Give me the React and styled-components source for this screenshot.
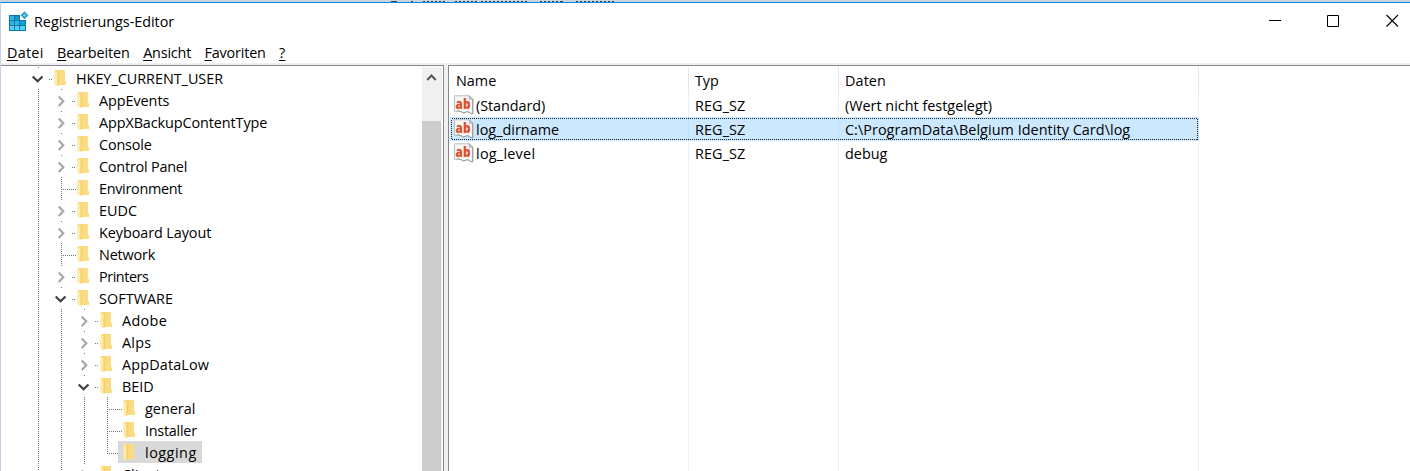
import React from "react";
import styled, { createGlobalStyle } from "styled-components";

const GlobalStyle = createGlobalStyle`
  *, *::before, *::after { box-sizing: border-box; }
  body { margin: 0; background: #fff; overflow: hidden; }
`;

const Window = styled.div`
  display: flex;
  flex-direction: column;
  width: 1410px;
  height: 471px;
  overflow: hidden;
  background: #fff;
  color: #000;
  font: 14.4px/22px "Open Sans", "Noto Sans", sans-serif;
`;

const Backdrop = styled.div`
  flex: none;
  height: 2px;
  background: #c8d3e6;
  svg { display: block; }
`;

const Frame = styled.div`
  flex: 1;
  min-height: 0;
  display: flex;
  flex-direction: column;
  border-top: 1px solid #1883d7;
  border-left: 1px solid #c5d1e8;
`;

const TitleBar = styled.header`
  flex: none;
  display: flex;
  align-items: center;
  height: 37px;
  padding: 0 11px 0 8px;
`;

const AppIcon = styled.svg`
  flex: none;
  display: block;
  width: 20px;
  height: 20px;
  margin: 1px 5px 0 0;
  overflow: visible;
`;

const Label = styled.span`
  white-space: pre;
  letter-spacing: ${(p) => p.$track || 0}px;
`;

const WindowButtons = styled.div`
  display: flex;
  gap: 46px;
  margin-left: auto;
  svg { display: block; width: 13px; height: 13px; margin-top: -2px; }
`;

const MenuBar = styled.nav`
  flex: none;
  display: flex;
  align-items: center;
  gap: 13.4px;
  height: 23px;
  padding: 2px 0 0 6px;
`;

const MenuItem = styled(Label)`
  u { text-underline-offset: 2px; text-decoration-thickness: 1px; text-decoration-skip-ink: none; }
`;

const Panes = styled.main`
  flex: 1;
  min-height: 0;
  display: flex;
  gap: 4px;
  padding-top: 2px;
  background: #f0f0f0;
`;

const TreePane = styled.section`
  flex: none;
  display: flex;
  width: 443px;
  border-top: 1px solid #828790;
  border-right: 1px solid #828790;
  background: #fff;
`;

const Tree = styled.div`
  flex: 1;
  min-width: 0;
  overflow: hidden;
  padding-top: 1px;
`;

const TreeRow = styled.div`
  display: flex;
  height: 22px;
  padding-left: 25px;
`;

const Branch = styled.svg`
  flex: none;
  display: block;
  width: ${(p) => p.$width}px;
  height: 22px;
  overflow: visible;
`;

const TreeItem = styled.div`
  display: flex;
  align-items: center;
  height: 22px;
  padding: 0 5px 0 4px;
  background: ${(p) => (p.$selected ? "#d9d9d9" : "transparent")};
  ${Label} { margin-top: 2px; }
`;

const Folder = styled.svg`
  flex: none;
  display: block;
  width: 13px;
  height: 18px;
  margin-right: 10px;
`;

const ScrollBar = styled.div`
  flex: none;
  width: 20px;
  margin: 1px 1px 0 0;
  padding-right: 1px;
  background: #f0f0f0;
  display: flex;
  flex-direction: column;
`;

const ScrollUp = styled.svg`
  display: block;
  flex: none;
  width: 19px;
  height: 54px;
`;

const ScrollThumb = styled.div`
  flex: 1;
  background: #cdcdcd;
`;

const ListPane = styled.section`
  flex: 1;
  min-width: 0;
  display: flex;
  flex-direction: column;
  border-top: 1px solid #828790;
  border-left: 1px solid #828790;
  padding: 1px 0 0 1px;
  background: #fff;
`;

const columns = "239px 150px 360px";

const HeaderRow = styled.div`
  flex: none;
  display: grid;
  grid-template-columns: ${columns};
  height: 26px;
`;

const HeaderCell = styled.div`
  padding: 3px 0 0 6px;
  border-right: 1px solid #e5e5e5;
`;

const ValueRow = styled.div`
  position: relative;
  flex: none;
  display: grid;
  grid-template-columns: ${columns};
  width: 749px;
  height: 24px;
  background: ${(p) => (p.$selected ? "#cce8ff" : "transparent")};
`;

const ValueCell = styled.div`
  display: flex;
  align-items: center;
  padding: 0 0 0 ${(p) => (p.$first ? 3 : 6)}px;
  border-right: 1px solid ${(p) => (p.$selected ? "#bfe0fb" : "#e5f0fb")};
  ${Label} { margin-top: 2px; }
`;

const FocusRect = styled.svg`
  position: absolute;
  left: 1px;
  top: 1px;
  width: 747px;
  height: 22px;
`;

const Filler = styled.div`
  flex: 1;
  display: grid;
  grid-template-columns: ${columns};
`;

const StringIcon = styled.svg`
  flex: none;
  display: block;
  width: 21px;
  height: 20px;
  margin-right: 2px;
  overflow: visible;
`;

const IconText = styled.text`
  font: 800 13.5px "Open Sans", sans-serif;
  fill: #d9532c;
`;

const treeData = [
  { name: "HKEY_CURRENT_USER", level: 0, kind: "open", track: -0.02 },
  { name: "AppEvents", level: 1, kind: "closed", track: -0.06 },
  { name: "AppXBackupContentType", level: 1, kind: "closed", track: -0.09 },
  { name: "Console", level: 1, kind: "closed", track: -0.15 },
  { name: "Control Panel", level: 1, kind: "closed", track: -0.2 },
  { name: "Environment", level: 1, kind: "leaf", track: -0.3 },
  { name: "EUDC", level: 1, kind: "closed", track: 0 },
  { name: "Keyboard Layout", level: 1, kind: "closed", track: -0.07 },
  { name: "Network", level: 1, kind: "leaf", track: -0.15 },
  { name: "Printers", level: 1, kind: "closed", track: -0.45 },
  { name: "SOFTWARE", level: 1, kind: "open", track: 0.05 },
  { name: "Adobe", level: 2, kind: "closed", track: 0.35 },
  { name: "Alps", level: 2, kind: "closed", track: 0.2 },
  { name: "AppDataLow", level: 2, kind: "closed", track: 0.15 },
  { name: "BEID", level: 2, kind: "open", track: 0 },
  { name: "general", level: 3, kind: "leaf", track: 0 },
  { name: "Installer", level: 3, kind: "leaf", track: -0.25 },
  { name: "logging", level: 3, kind: "leaf", track: 0.5, selected: true, last: true },
  { name: "Clients", level: 2, kind: "closed", track: 0 },
];

const values = [
  { name: "(Standard)", type: "REG_SZ", data: "(Wert nicht festgelegt)", t: [-0.06, 0.1, 0] },
  { name: "log_dirname", type: "REG_SZ", data: "C:\\ProgramData\\Belgium Identity Card\\log", t: [0.02, 0.1, 0.05], selected: true },
  { name: "log_level", type: "REG_SZ", data: "debug", t: [0.25, 0.1, 0] },
];

const INDENT = 23;

function BranchLines({ level, kind, last }) {
  const x = level * INDENT + 12.5;
  const guides = [];
  for (let i = 0; i < level; i++) guides.push(i * INDENT + 12.5);
  return (
    <Branch $width={level * INDENT + 23} aria-hidden="true">
      <g stroke="#777" strokeDasharray="1 1" shapeRendering="crispEdges">
        {guides.map((g) => (
          <path key={g} d={`M${g} 0V22`} />
        ))}
        {kind === "leaf" ? (
          <path d={`M${x} 0V${last ? 13 : 22}M${x + 1.5} 12.5H${x + 14}`} />
        ) : (
          <path d={`M${x} 0V1M${x + 10.5} 12.5H${x + 14}`} />
        )}
      </g>
      {kind === "closed" && <path d={`M${x - 2.8} 7.4l4.6 4.8l-4.6 4.8`} fill="none" stroke="#a6a6a6" strokeWidth="2.1" />}
      {kind === "open" && <path d={`M${x - 5.8} 9.5l4.9 4.8l4.9 -4.8`} fill="none" stroke="#404040" strokeWidth="2.2" />}
    </Branch>
  );
}

function FolderIcon() {
  return (
    <Folder viewBox="0 0 13 18">
      <path d="M2 1H12V12L13 12.5V16H2Z" fill="#f9d575" />
      <path d="M7 1H12V12L13 12.5V16H6Z" fill="#fbdc84" />
      <path d="M1.4 1L4.8 3.5V17.6L1.4 15.5Z" fill="#ffeaa8" />
      <path d="M5 3.5V17" stroke="#efc860" strokeWidth=".7" />
    </Folder>
  );
}

function ValueIcon() {
  return (
    <StringIcon viewBox="0 0 21 20">
      <path d="M1.5 .8H16.5L19.8 4.2V18.8Q17.5 18.8 16 17.3Q14.5 16 12.7 17.3Q10.6 18.8 8.5 17Q6 15 4 16.3L1.5 16.5Z" fill="#f7f7f7" stroke="#bdbdbd" />
      <path d="M19.7 4.5V18.8Q17.5 18.8 16 17.3Q14.5 16 12.7 17.3Q10.6 18.8 8.5 17Q6 15 4 16.3" fill="none" stroke="#999" />
      <path d="M16.3 .8V4.3H19.8Z" fill="#d5d5d5" stroke="#a3a3a3" strokeWidth=".8" />
      <IconText x="2.6" y="13.6" textLength="15" lengthAdjust="spacingAndGlyphs">ab</IconText>
    </StringIcon>
  );
}

function RegeditIcon() {
  return (
    <AppIcon viewBox="0 0 20 20">
      <path d="M0 3H11V8H17V19H0Z" fill="#0b79a9" />
      <path d="M1 4h4v4H1zM1 9h4v4H1zM6 9h4v4H6z" fill="#35b5e5" />
      <path d="M6 4h4v4H6z" fill="#1695c8" />
      <path d="M11 9h5v4h-5z" fill="#1a9bcf" />
      <path d="M1 14h4v4H1zM6 14h4v4H6zM11 14h5v4h-5z" fill="#59cdf4" />
      <path d="M15.5 -.8L19.4 3.2L15.5 7.2L11.6 3.2Z" fill="#2e9cc9" />
      <path d="M15.5 1.5L17.2 3.2L15.5 4.9L13.8 3.2Z" fill="#6fd3f5" />
    </AppIcon>
  );
}

export default function App() {
  return (
    <>
      <GlobalStyle />
      <Window>
        <Backdrop>
          <svg width="700" height="2">
            <path d="M391 1.5h6M411 1.5h2M561 1.5h2" stroke="#3b4354" />
            <path d="M423 1.5h24M455 1.5h23M481 1.5h46M540 1.5h24M576 1.5h38" stroke="#3b4354" strokeDasharray="2 2" />
          </svg>
        </Backdrop>
        <Frame>
          <TitleBar>
            <RegeditIcon />
            <Label $track={-0.04}>Registrierungs-Editor</Label>
            <WindowButtons>
              <svg viewBox="0 0 13 13"><path d="M1 6.5H13" stroke="#000" /></svg>
              <svg viewBox="0 0 13 13"><path d="M.5 1.5H11.5V12.5H.5Z" fill="none" stroke="#000" /></svg>
              <svg viewBox="0 0 13 13"><path d="M.5 1L12 12.5M12 1L.5 12.5" stroke="#000" strokeWidth="1.1" /></svg>
            </WindowButtons>
          </TitleBar>
          <MenuBar>
            <MenuItem $track={0.25}><u>D</u>atei</MenuItem>
            <MenuItem $track={-0.1}><u>B</u>earbeiten</MenuItem>
            <MenuItem $track={-0.19}><u>A</u>nsicht</MenuItem>
            <MenuItem $track={-0.18}><u>F</u>avoriten</MenuItem>
            <MenuItem><u>?</u></MenuItem>
          </MenuBar>
          <Panes>
            <TreePane>
              <Tree>
                {treeData.map((n) => (
                  <TreeRow key={n.name}>
                    <BranchLines {...n} />
                    <TreeItem $selected={n.selected}>
                      <FolderIcon />
                      <Label $track={n.track}>{n.name}</Label>
                    </TreeItem>
                  </TreeRow>
                ))}
              </Tree>
              <ScrollBar>
                <ScrollUp viewBox="0 0 19 54">
                  <path d="M5.2 13L9.5 8.5L13.8 13" fill="none" stroke="#555" strokeWidth="2" />
                </ScrollUp>
                <ScrollThumb />
              </ScrollBar>
            </TreePane>
            <ListPane>
              <HeaderRow>
                <HeaderCell><Label $track={0}>Name</Label></HeaderCell>
                <HeaderCell><Label $track={-0.1}>Typ</Label></HeaderCell>
                <HeaderCell><Label $track={0.1}>Daten</Label></HeaderCell>
              </HeaderRow>
              {values.map((v) => (
                <ValueRow key={v.name} $selected={v.selected}>
                  <ValueCell $first $selected={v.selected}>
                    <ValueIcon />
                    <Label $track={v.t[0]}>{v.name}</Label>
                  </ValueCell>
                  <ValueCell $selected={v.selected}><Label $track={v.t[1]}>{v.type}</Label></ValueCell>
                  <ValueCell $selected={v.selected}><Label $track={v.t[2]}>{v.data}</Label></ValueCell>
                  {v.selected && (
                    <FocusRect>
                      <rect x=".5" y=".5" width="746" height="21" fill="none" stroke="#222" strokeDasharray="1 1" shapeRendering="crispEdges" />
                    </FocusRect>
                  )}
                </ValueRow>
              ))}
              <Filler>
                <ValueCell />
                <ValueCell />
                <ValueCell />
              </Filler>
            </ListPane>
          </Panes>
        </Frame>
      </Window>
    </>
  );
}
